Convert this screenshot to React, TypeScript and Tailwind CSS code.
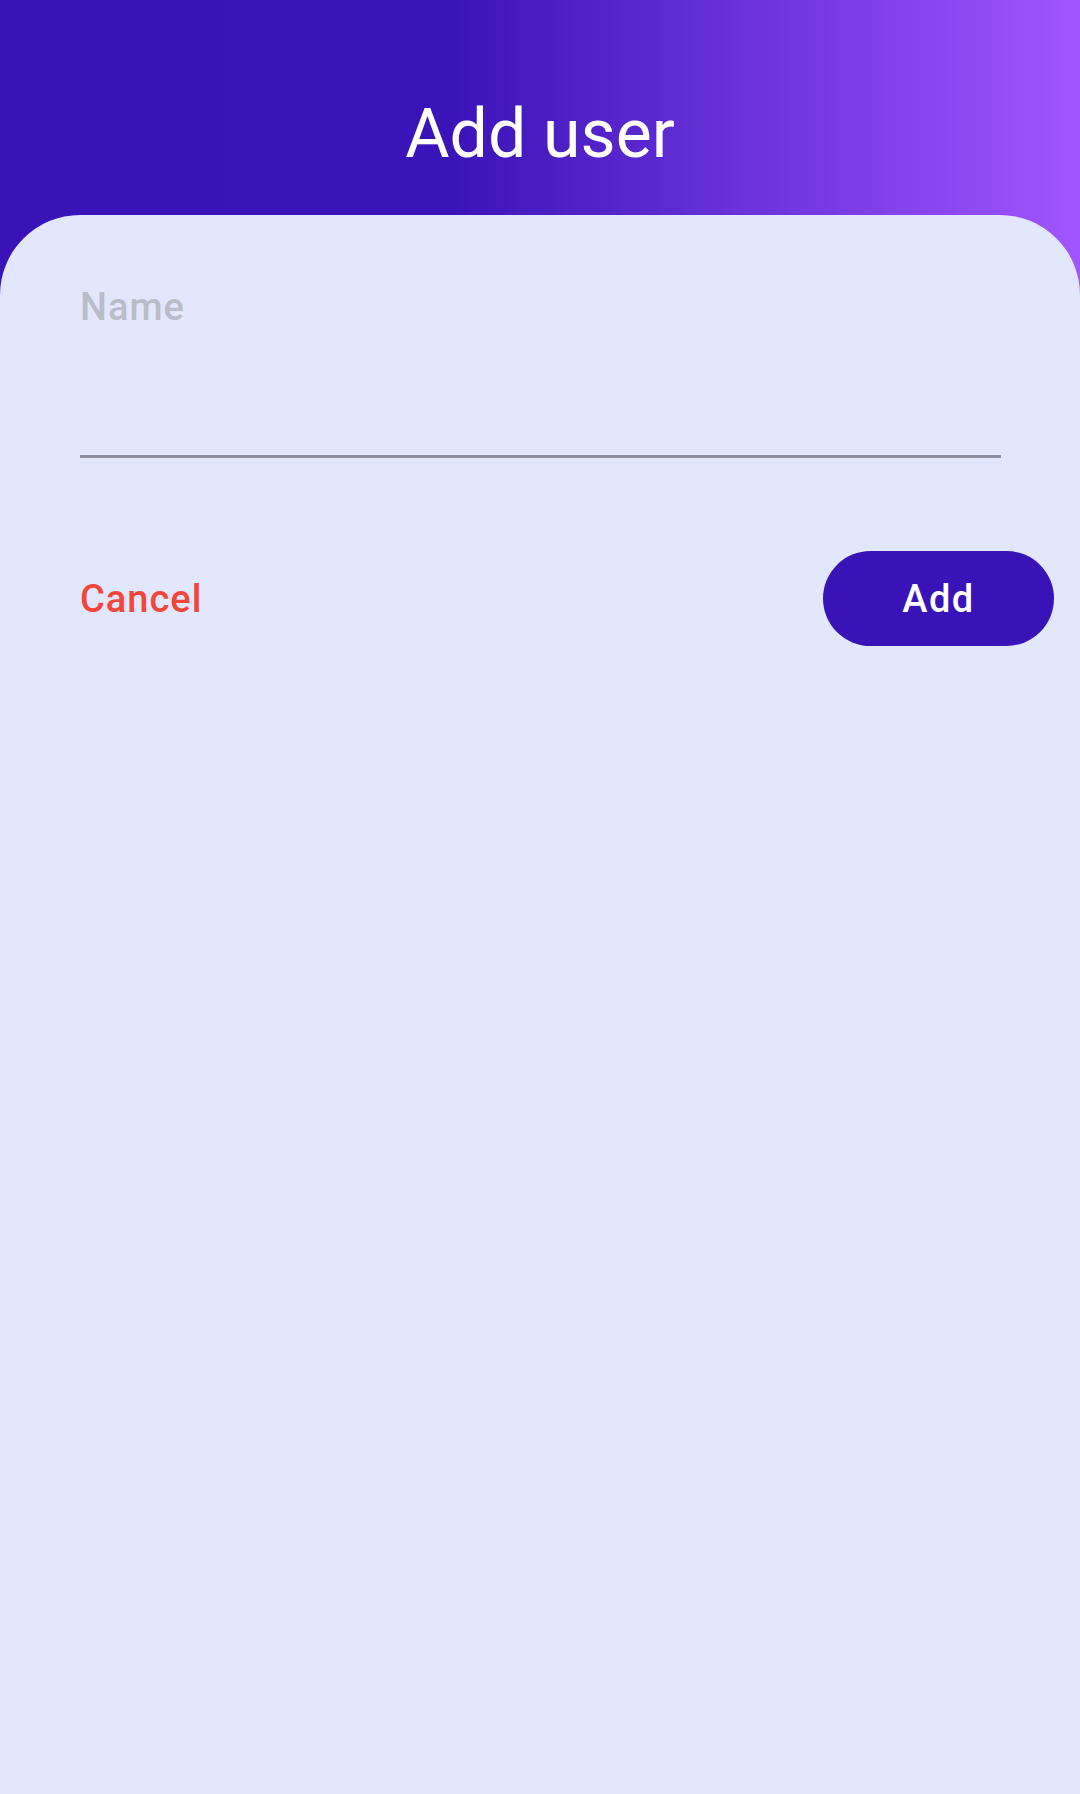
import React from "react";

export default function App() {
  return (
    <div
      className="min-h-[1794px] flex flex-col bg-[linear-gradient(90deg,#3a13b8_0%,#3b14b9_42%,#a155fe_100%)]"
      style={{ fontFamily: "Roboto, 'Noto Sans', sans-serif" }}
    >
      <div className="h-[215px] pt-[100px] flex justify-center">
        <h1 className="text-[68px] leading-none font-normal text-white">Add user</h1>
      </div>
      <div className="flex-1 bg-[#e2e7fd] rounded-t-[80px] pt-[73px]">
        <div className="ml-[80px] mr-[79px] border-b-[3px] border-[#8e90a2] h-[170px]">
          <label className="block text-[38px] leading-none font-medium tracking-[1px] text-[#b9bdca]">Name</label>
        </div>
        <div className="mt-[93px] pl-[80px] pr-[26px] flex items-center justify-between">
          <button className="text-[38px] leading-none font-medium tracking-[1px] text-[#f2463a]">Cancel</button>
          <button className="w-[231px] h-[95px] rounded-full bg-[#3a13b8] text-white text-[38px] leading-none font-medium tracking-[1.5px] flex items-center justify-center">
            Add
          </button>
        </div>
      </div>
    </div>
  );
}
